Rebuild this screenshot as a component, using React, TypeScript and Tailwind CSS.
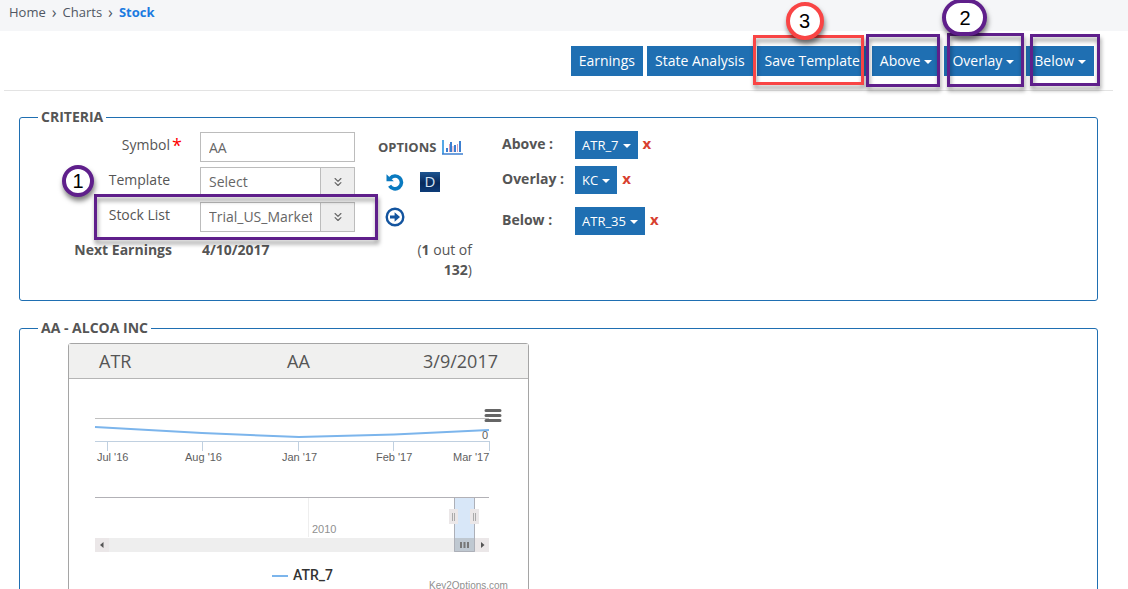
import React from "react";
import { ChevronsDown } from "lucide-react";

const frame =
  "pointer-events-none absolute z-10 border-3 drop-shadow-[1px_4px_2px_rgba(0,0,0,0.4)]";
const badge =
  "pointer-events-none absolute z-20 flex items-center justify-center rounded-full border-4 bg-white font-['Liberation_Sans',sans-serif] text-xl leading-none text-black shadow-[1px_4px_5px_rgba(0,0,0,0.5)]";

function Caret() {
  return (
    <span className="ml-1 inline-block border-x-4 border-t-4 border-x-transparent border-t-white align-middle" />
  );
}

function ToolButton({
  label,
  menu = false,
  children,
}: {
  label: string;
  menu?: boolean;
  children?: React.ReactNode;
}) {
  return (
    <div className="relative">
      <button
        type="button"
        className="block h-[30px] bg-[#1f6fb2] px-2 text-sm whitespace-nowrap text-white"
      >
        {label}
        {menu && <Caret />}
      </button>
      {children}
    </div>
  );
}

function FieldLabel({
  id,
  text,
  required = false,
}: {
  id: string;
  text: string;
  required?: boolean;
}) {
  return (
    <label htmlFor={id} className="flex w-[162px] justify-end leading-[26px]">
      {text}
      <span className="w-3 text-right text-lg leading-[26px] text-[#ff0000]">
        {required ? "*" : ""}
      </span>
    </label>
  );
}

function SelectField({ id, value }: { id: string; value: string }) {
  return (
    <div className="flex h-[30px] w-[155px] border border-[#bcbcbc] bg-white">
      <select
        id={id}
        className="min-w-0 flex-1 appearance-none bg-white pr-2 pl-2 text-[#666]"
      >
        <option>{value}</option>
      </select>
      <span className="pointer-events-none flex w-[34px] items-center justify-center border-l border-[#bcbcbc] bg-[#eee] text-[#666]">
        <ChevronsDown size={14} strokeWidth={2} />
      </span>
    </div>
  );
}

function Indicator({ label, value }: { label: string; value: string }) {
  return (
    <div className="flex items-start">
      <span className="w-[73px] leading-[26px] font-bold text-[#555]">
        {label} :
      </span>
      <button type="button" className="h-7 bg-[#1f6fb2] px-[7px] text-[13px] text-white">
        {value}
        <Caret />
      </button>
      <button
        type="button"
        aria-label={`Remove ${value}`}
        className="ml-[5px] h-6 text-[15px] leading-6 font-bold text-[#d8402f]"
      >
        x
      </button>
    </div>
  );
}

function BarsIcon() {
  return (
    <svg width="22" height="17" viewBox="0 0 22 17" aria-hidden="true">
      <path d="M1 1V15" stroke="#55a8e6" strokeWidth="2" />
      <path d="M0 15H21" stroke="#3c7fd0" strokeWidth="1.5" />
      <path d="M5 13V9M9 13V3M13 13V6M18 13V2" stroke="#3c7fd0" strokeWidth="2" />
      <path d="M7.500 13V5M11 13V7M15.500 13V5" stroke="#d79ab4" strokeWidth="1" />
    </svg>
  );
}

function UndoIcon() {
  return (
    <svg width="18" height="18" viewBox="0 0 18 18" aria-hidden="true">
      <path d="M4.200 5.300A6.400 6.400 0 1 1 3.600 12.800" fill="none" stroke="#0a7ac0" strokeWidth="3.600" />
      <path d="M0.500 1.200V8.300H7.800Z" fill="#0a7ac0" />
    </svg>
  );
}

function DailyIcon() {
  return (
    <svg width="20" height="20" viewBox="0 0 20 20" aria-hidden="true">
      <defs>
        <linearGradient id="daily" x1="0" y1="0" x2="0" y2="1">
          <stop offset="0" stopColor="#1d5591" />
          <stop offset="0.55" stopColor="#082a5c" />
          <stop offset="1" stopColor="#0d3c78" />
        </linearGradient>
      </defs>
      <rect width="20" height="20" fill="url(#daily)" />
      <text x="10" y="15" textAnchor="middle" fontSize="15" fill="#d5e4f5" fontFamily="Open Sans, sans-serif">
        D
      </text>
    </svg>
  );
}

function NextIcon() {
  return (
    <svg width="20" height="20" viewBox="0 0 20 20" aria-hidden="true">
      <circle cx="10" cy="10" r="8.3" fill="none" stroke="#13549f" strokeWidth="2.4" />
      <path d="M5 8.6h4.6V5.2L15 10l-5.400 4.800v-3.400H5z" fill="#13549f" />
    </svg>
  );
}

const ticks = [
  { x: 38.5, label: "Jul '16", at: 28 },
  { x: 133.5, label: "Aug '16", at: 116 },
  { x: 229.5, label: "Jan '17", at: 213 },
  { x: 324.5, label: "Feb '17", at: 307 },
  { x: 420.5, label: "Mar '17", at: 384 },
];

function AtrChart() {
  return (
    <svg
      width="459"
      height="230"
      viewBox="0 0 459 230"
      className="block font-['Liberation_Sans',sans-serif]"
      fontSize="11"
      role="img"
      aria-label="ATR_7"
    >
      <path d="M26 39.5H420" stroke="#c0c0c0" />
      <path d="M26 62.5H421" stroke="#c0d0e0" />
      {ticks.map((t) => (
        <g key={t.label}>
          <path d={`M${t.x} 62V72`} stroke="#c0d0e0" />
          <text x={t.at} y="82" fill="#606060">
            {t.label}
          </text>
        </g>
      ))}
      <path d="M26 48L133 54L230 58L325 55.5L420 51" fill="none" stroke="#7cb5ec" strokeWidth="2" />
      <text x="413" y="60" fill="#606060">
        0
      </text>
      <path d="M417 31.5H431M417 36.5H431M417 41.5H431" stroke="#666" strokeWidth="3" strokeLinecap="round" />

      <path d="M26 118.5H420" stroke="#b2b1b6" />
      <path d="M239.5 119V158" stroke="#eee" />
      <text x="243" y="154" fill="#909090">
        2010
      </text>
      <rect x="26" y="159" width="394" height="14" fill="#eee" />
      <rect x="26" y="159" width="14" height="14" fill="#ebe7e8" />
      <rect x="406" y="159" width="14" height="14" fill="#ebe7e8" />
      <path d="M34.5 163V169L31 166Z" fill="#555" />
      <path d="M412 163V169L415.5 166Z" fill="#555" />
      <rect x="385" y="119" width="21" height="40" fill="#d8e7f8" />
      <rect x="385" y="159" width="21" height="14" fill="#bfc8d1" />
      <path d="M385.5 119V172.5H405.5V119" fill="none" stroke="#adb0b8" />
      <path d="M392 163V169M395.5 163V169M399 163V169" stroke="#777" strokeWidth="2" />
      <rect x="380" y="130" width="9" height="15" fill="#ebe7e8" />
      <rect x="401" y="130" width="9" height="15" fill="#ebe7e8" />
      <path d="M383.5 134V142M385.5 134V142M404.5 134V142M406.5 134V142" stroke="#aaa" />

      <path d="M203 197H219" stroke="#7cb5ec" strokeWidth="2" />
      <text x="224" y="201" fontSize="14" fontWeight="500" fill="#333" fontFamily="Roboto, sans-serif">
        ATR_7
      </text>
      <text x="360" y="210" fontSize="10" fill="#909090">
        Key2Options.com
      </text>
    </svg>
  );
}

export default function App() {
  return (
    <div className="h-screen overflow-hidden bg-white font-['Open_Sans',sans-serif] text-sm text-[#555]">
      <nav aria-label="Breadcrumb" className="h-[31px] bg-[#f5f6f8] px-[9px] text-[13px] leading-[25px] text-[#4f5763]">
        <ol className="flex gap-[6px]">
          <li><a href="#home">Home</a></li>
          <li aria-hidden="true" className="text-base leading-6">›</li>
          <li><a href="#charts">Charts</a></li>
          <li aria-hidden="true" className="text-base leading-6">›</li>
          <li><a href="#stock" className="font-bold text-[#1b7be0]">Stock</a></li>
        </ol>
      </nav>

      <div className="mr-[15px] ml-1 flex justify-end gap-1 border-b border-[#e3e3e3] pt-[15px] pr-[19px] pb-[14px]">
        <ToolButton label="Earnings" />
        <ToolButton label="State Analysis" />
        <ToolButton label="Save Template">
          <span className={`${frame} -top-[11px] right-1 -bottom-[9px] -left-1 border-[#f94545]`} />
          <span className={`${badge} -top-11 left-[29px] size-[38px] border-[#f94545]`}>3</span>
        </ToolButton>
        <ToolButton label="Above" menu>
          <span className={`${frame} -top-3 right-0 -bottom-[11px] -left-[6px] border-[#5f1f8b]`} />
        </ToolButton>
        <ToolButton label="Overlay" menu>
          <span className={`${frame} -top-[13px] -right-[2px] -bottom-[11px] left-[3px] border-[#5f1f8b]`} />
          <span className={`${badge} -top-[47px] -left-[2px] h-[37px] w-[45px] border-[#5f1f8b]`}>2</span>
        </ToolButton>
        <ToolButton label="Below" menu>
          <span className={`${frame} -top-3 -right-[6px] -bottom-[10px] left-1 border-[#5f1f8b]`} />
        </ToolButton>
      </div>

      <fieldset className="mt-4 mr-[30px] ml-[19px] rounded-[3px] border border-[#1f6fb2] pb-5">
        <legend className="ml-[18px] px-[3px] leading-5 font-bold">CRITERIA</legend>
        <div className="flex pt-[5px]">
          <div className="flex flex-col gap-[5px]">
            <div className="flex gap-[18px]">
              <FieldLabel id="symbol" text="Symbol" required />
              <input
                id="symbol"
                defaultValue="AA"
                className="h-[30px] w-[155px] border border-[#bcbcbc] px-2 text-[#666]"
              />
            </div>
            <div className="relative flex gap-[18px]">
              <FieldLabel id="template" text="Template" />
              <SelectField id="template" value="Select" />
              <span className={`${badge} -top-[2px] left-[42px] size-8 border-[#5f1f8b]`}>1</span>
            </div>
            <div className="relative flex gap-[18px]">
              <FieldLabel id="stock-list" text="Stock List" />
              <SelectField id="stock-list" value="Trial_US_Markets" />
              <span className={`${frame} -top-2 -right-[23px] -bottom-2 left-[74px] border-[#5f1f8b]`} />
            </div>
            <div className="flex gap-[30px] leading-[26px] font-bold">
              <span className="w-[152px] text-right">Next Earnings</span>
              <span>4/10/2017</span>
            </div>
          </div>

          <div className="ml-[23px] flex w-[94px] flex-col">
            <div className="flex h-[30px] items-center gap-[6px] text-[13px] font-bold">
              OPTIONS
              <BarsIcon />
            </div>
            <div className="mt-[5px] flex h-[30px] items-center gap-4 pl-2">
              <button type="button" aria-label="Reset">
                <UndoIcon />
              </button>
              <button type="button" aria-label="Daily">
                <DailyIcon />
              </button>
            </div>
            <div className="mt-[5px] flex h-[30px] items-center pl-[7px]">
              <button type="button" aria-label="Next stock">
                <NextIcon />
              </button>
            </div>
            <p className="mt-2 pl-4 text-right leading-5">
              (<b>1</b> out of <b>132</b>)
            </p>
          </div>

          <div className="-mt-px ml-[30px] flex flex-col gap-[7px]">
            <Indicator label="Above" value="ATR_7" />
            <Indicator label="Overlay" value="KC" />
            <div className="mt-[6px]">
              <Indicator label="Below" value="ATR_35" />
            </div>
          </div>
        </div>
      </fieldset>

      <fieldset className="mt-[17px] mr-[30px] ml-[19px] rounded-[3px] border border-[#1f6fb2] pb-5">
        <legend className="ml-[18px] px-[3px] leading-5 font-bold">AA - ALCOA INC</legend>
        <section className="mt-[5px] ml-12 w-[461px] rounded-t-[3px] border border-[#a5a5a5]">
          <header className="grid h-[35px] grid-cols-3 items-center border-b border-[#b5b5b5] bg-[#f0f0ef] px-[30px] text-lg">
            <span>ATR</span>
            <span className="text-center">AA</span>
            <span className="text-right">3/9/2017</span>
          </header>
          <AtrChart />
        </section>
      </fieldset>
    </div>
  );
}
